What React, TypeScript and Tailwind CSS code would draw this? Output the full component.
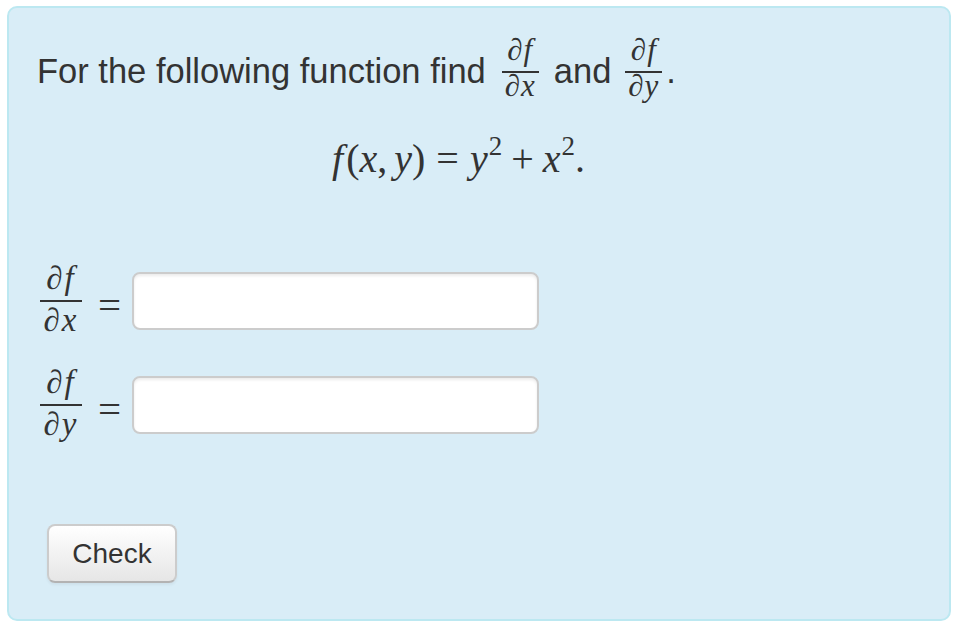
import type { ReactNode } from 'react';

const mathFont = "font-['Liberation_Serif','DejaVu_Serif',serif]";

// Fraction built from a column: numerator, bar, denominator
function Frac({ num, den, big = false }: { num: ReactNode; den: ReactNode; big?: boolean }) {
  if (big) {
    return (
      <span className={`flex w-[42px] flex-col items-center italic tracking-[2px] ${mathFont} text-[33px]`}>
        <span className="mb-[7px] block h-[30px] leading-[30px]">{num}</span>
        <span className="h-[2px] w-full bg-[#333]" />
        <span className="mt-[3px] block h-[34px] leading-[30px]">{den}</span>
      </span>
    );
  }
  return (
    <span className={`flex w-[37px] flex-col items-center italic tracking-[1px] ${mathFont} text-[31px]`}>
      <span className="mb-[8px] block h-[26px] leading-[26px]">{num}</span>
      <span className="h-[2px] w-full bg-[#333]" />
      <span className="block h-[34px] leading-[26px]">{den}</span>
    </span>
  );
}

function AnswerRow({ den }: { den: string }) {
  return (
    <div className="flex h-[104px] items-center">
      <div className="ml-[3px]">
        <Frac big num="∂f" den={den} />
      </div>
      <span className={`ml-[16px] mt-[8px] ${mathFont} text-[41px] leading-none`}>=</span>
      <input
        type="text"
        className="ml-[11px] h-[58px] w-[407px] rounded-[8px] border-2 border-[#ccc] bg-white shadow-[inset_0_2px_3px_rgba(0,0,0,0.08)] outline-none"
      />
    </div>
  );
}

export default function App() {
  return (
    <div className="min-h-screen bg-white px-[7px] pt-[6px] font-['Liberation_Sans',Arial,sans-serif] text-[#333]">
      <div className="h-[615px] rounded-[10px] border-2 border-[#bce8f1] bg-[#d9edf7] pl-[28px] pt-[34px]">
        {/* Question */}
        <div className="flex h-[60px] items-center text-[34.5px]">
          <span>For the following function find</span>
          <span className="ml-[16px]">
            <Frac num="∂f" den="∂x" />
          </span>
          <span className="ml-[15px]">and</span>
          <span className="ml-[14px]">
            <Frac num="∂f" den="∂y" />
          </span>
          <span className="ml-[4px]">.</span>
        </div>

        {/* Function */}
        <div className={`mt-[35px] flex h-[44px] items-baseline pl-[295px] ${mathFont} text-[40px] leading-[44px]`}>
          <i>f</i>
          <span className="ml-[3px]">(</span>
          <i>x</i>
          <span>,</span>
          <i className="ml-[7px]">y</i>
          <span>)</span>
          <span className="ml-[11px]">=</span>
          <i className="ml-[11px]">y</i>
          <span className="relative -top-[17px] ml-[1px] text-[27px]">2</span>
          <span className="ml-[9px]">+</span>
          <i className="ml-[9px]">x</i>
          <span className="relative -top-[17px] ml-[1px] text-[27px]">2</span>
          <span>.</span>
        </div>

        {/* Answers */}
        <div className="mt-[68px]">
          <AnswerRow den="∂x" />
          <AnswerRow den="∂y" />
        </div>

        <button className="ml-[10px] mt-[67px] h-[59px] w-[130px] rounded-[8px] border-2 border-[#ccc] border-b-[#b3b3b3] bg-gradient-to-b from-white to-[#e6e6e6] text-[28px] text-[#333] shadow-[0_2px_3px_rgba(0,0,0,0.05)]">
          Check
        </button>
      </div>
    </div>
  );
}
